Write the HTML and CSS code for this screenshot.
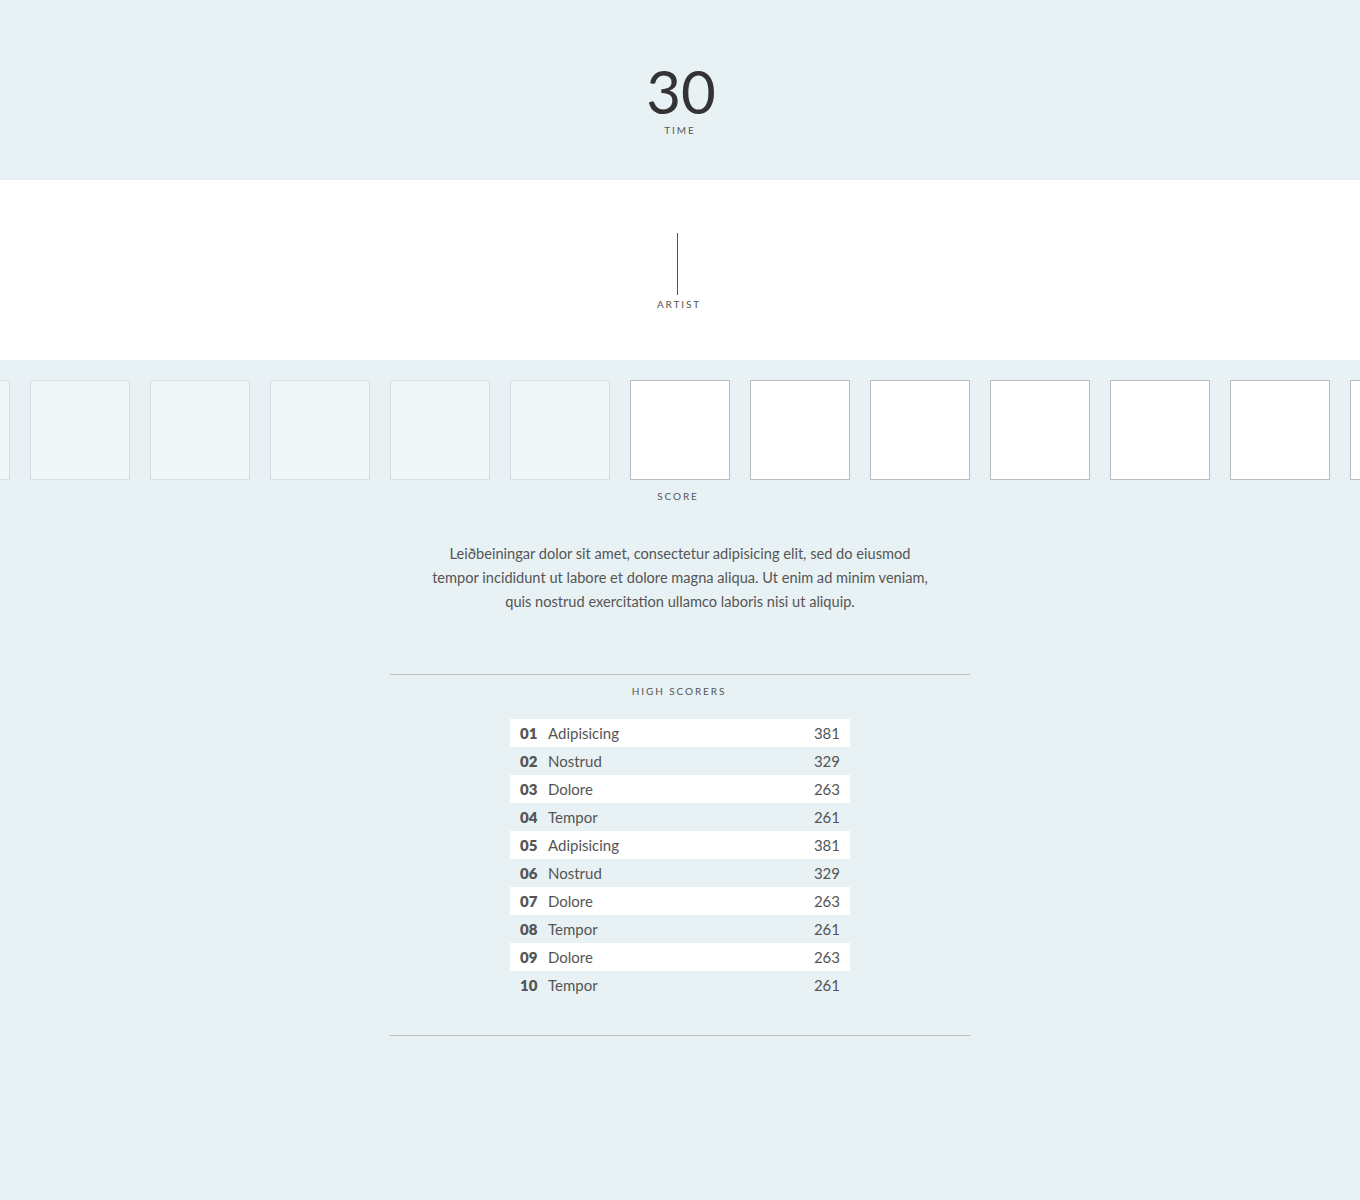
FILE: index.html
```html
<!DOCTYPE html>
<html>
<head>
<meta charset="utf-8">
<link rel="stylesheet" href="styles.css">
</head>
<body>
<header class="timer">
  <div class="timer-value">30</div>
  <div class="label">Time</div>
</header>
<section class="artist">
  <div class="caret"></div>
  <div class="label">Artist</div>
</section>
<section class="score">
  <div class="tiles">
    <div class="tile done"></div>
    <div class="tile done"></div>
    <div class="tile done"></div>
    <div class="tile done"></div>
    <div class="tile done"></div>
    <div class="tile done"></div>
    <div class="tile"></div>
    <div class="tile"></div>
    <div class="tile"></div>
    <div class="tile"></div>
    <div class="tile"></div>
    <div class="tile"></div>
    <div class="tile"></div>
  </div>
  <div class="label">Score</div>
</section>
<p class="intro">Leiðbeiningar dolor sit amet, consectetur adipisicing elit, sed do eiusmod tempor incididunt ut labore et dolore magna aliqua. Ut enim ad minim veniam, quis nostrud exercitation ullamco laboris nisi ut aliquip.</p>
<section class="scorers">
  <div class="label">High Scorers</div>
  <ol class="board">
    <li><b>01</b><span class="name">Adipisicing</span><span class="pts">381</span></li>
    <li><b>02</b><span class="name">Nostrud</span><span class="pts">329</span></li>
    <li><b>03</b><span class="name">Dolore</span><span class="pts">263</span></li>
    <li><b>04</b><span class="name">Tempor</span><span class="pts">261</span></li>
    <li><b>05</b><span class="name">Adipisicing</span><span class="pts">381</span></li>
    <li><b>06</b><span class="name">Nostrud</span><span class="pts">329</span></li>
    <li><b>07</b><span class="name">Dolore</span><span class="pts">263</span></li>
    <li><b>08</b><span class="name">Tempor</span><span class="pts">261</span></li>
    <li><b>09</b><span class="name">Dolore</span><span class="pts">263</span></li>
    <li><b>10</b><span class="name">Tempor</span><span class="pts">261</span></li>
  </ol>
</section>
</body>
</html>
```
FILE: styles.css
```css
* { box-sizing: border-box; }
html, body { margin: 0; padding: 0; }
body {
  background: #e8f1f4;
  font-family: Lato, "Open Sans", sans-serif;
  color: #555;
  min-height: 1200px;
}
.label {
  font-size: 10px;
  letter-spacing: 1.9px;
  text-transform: uppercase;
  color: #555;
  text-align: center;
  line-height: 12px;
}
.timer {
  height: 180px;
  padding-top: 63px;
  display: flex;
  flex-direction: column;
  align-items: center;
}
.timer-value {
  font-size: 60px;
  font-weight: 400;
  line-height: 56px;
  color: #333;
  margin-left: 2px;
}
.timer .label { margin-top: 5px; }
.artist {
  background: #fff;
  height: 180px;
  padding-top: 53px;
  display: flex;
  flex-direction: column;
  align-items: center;
}
.caret {
  width: 1px;
  height: 62px;
  background: #555;
  margin-right: 6px;
}
.artist .label { margin-top: 3px; margin-right: 2px; }
.score {
  padding-top: 20px;
  overflow: hidden;
}
.tiles {
  display: flex;
  justify-content: center;
  gap: 20px;
  width: 1360px;
}
.tile {
  flex: 0 0 100px;
  height: 100px;
  background: #fff;
  border: 1px solid #bcbfc1;
}
.tile.done {
  background: #f1f7f9;
  border-color: #d7dfe2;
}
.score .label { margin-top: 10px; margin-left: -4px; }
.intro {
  width: 504px;
  margin: 40px auto 0;
  text-align: center;
  font-size: 14.6px;
  line-height: 24px;
  color: #555;
}
.scorers {
  width: 580px;
  margin: 60px auto 0;
  border-top: 1px solid #bcc1c4;
  border-bottom: 1px solid #bcc1c4;
  padding: 10px 0 36px;
}
.scorers .label { margin-left: -2px; }
.board {
  list-style: none;
  width: 340px;
  margin: 22px auto 0;
  padding: 0;
}
.board li {
  display: flex;
  align-items: center;
  height: 28px;
  padding: 0 10px;
  font-size: 15px;
}
.board li:nth-child(odd) { background: #fff; }
.board b {
  width: 28px;
  font-weight: 800;
  color: #555;
}
.board .name { flex: 1; }
.board .pts { text-align: right; }
```
